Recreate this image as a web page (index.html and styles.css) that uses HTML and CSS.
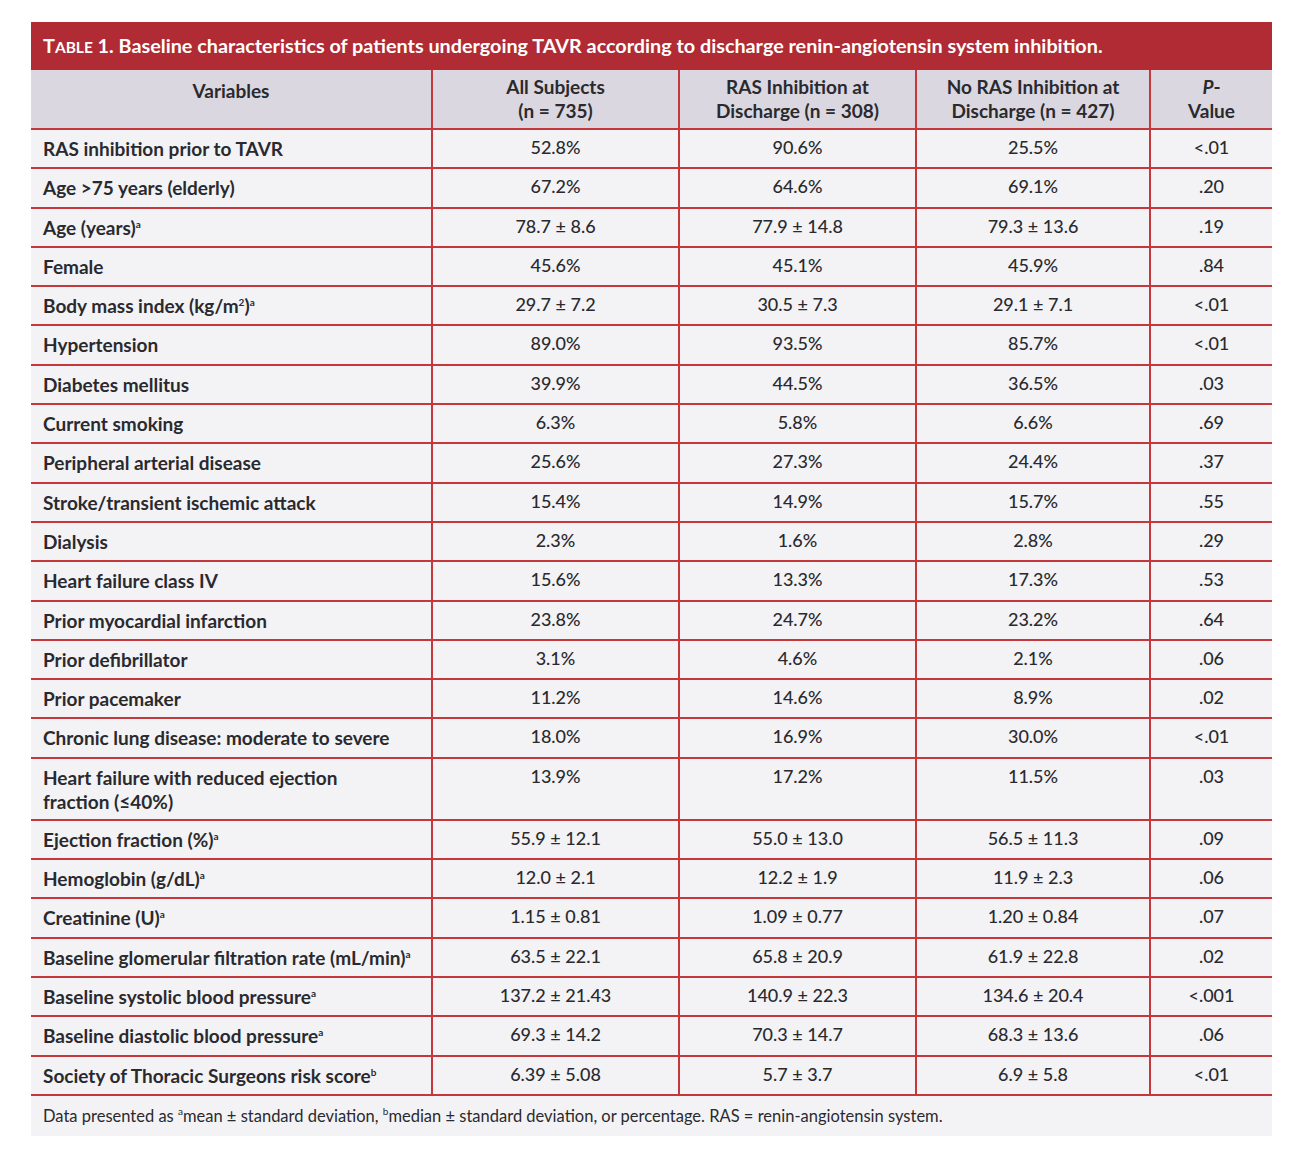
FILE: index.html
```html
<!DOCTYPE html>
<html>
<head>
<meta charset="utf-8">
<link rel="stylesheet" href="styles.css">
</head>
<body>
<div class="wrap">
  <div class="title"><span class="cap">T</span><span class="sc">ABLE</span> 1. Baseline characteristics of patients undergoing TAVR according to discharge renin-angiotensin system inhibition.</div>
  <table class="tbl">
    <colgroup>
      <col class="c1"><col class="c2"><col class="c3"><col class="c4"><col class="c5">
    </colgroup>
    <thead>
      <tr>
        <th class="hv">Variables</th>
        <th>All Subjects<br>(n = 735)</th>
        <th>RAS Inhibition at<br>Discharge (n = 308)</th>
        <th>No RAS Inhibition at<br>Discharge (n = 427)</th>
        <th><i>P</i>-<br>Value</th>
      </tr>
    </thead>
    <tbody>
      <tr><td>RAS inhibition prior to TAVR</td><td>52.8%</td><td>90.6%</td><td>25.5%</td><td>&lt;.01</td></tr>
      <tr><td>Age &gt;75 years (elderly)</td><td>67.2%</td><td>64.6%</td><td>69.1%</td><td>.20</td></tr>
      <tr><td>Age (years)<sup>a</sup></td><td>78.7 ± 8.6</td><td>77.9 ± 14.8</td><td>79.3 ± 13.6</td><td>.19</td></tr>
      <tr><td>Female</td><td>45.6%</td><td>45.1%</td><td>45.9%</td><td>.84</td></tr>
      <tr><td>Body mass index (kg/m<sup>2</sup>)<sup>a</sup></td><td>29.7 ± 7.2</td><td>30.5 ± 7.3</td><td>29.1 ± 7.1</td><td>&lt;.01</td></tr>
      <tr><td>Hypertension</td><td>89.0%</td><td>93.5%</td><td>85.7%</td><td>&lt;.01</td></tr>
      <tr><td>Diabetes mellitus</td><td>39.9%</td><td>44.5%</td><td>36.5%</td><td>.03</td></tr>
      <tr><td>Current smoking</td><td>6.3%</td><td>5.8%</td><td>6.6%</td><td>.69</td></tr>
      <tr><td>Peripheral arterial disease</td><td>25.6%</td><td>27.3%</td><td>24.4%</td><td>.37</td></tr>
      <tr><td>Stroke/transient ischemic attack</td><td>15.4%</td><td>14.9%</td><td>15.7%</td><td>.55</td></tr>
      <tr><td>Dialysis</td><td>2.3%</td><td>1.6%</td><td>2.8%</td><td>.29</td></tr>
      <tr><td>Heart failure class IV</td><td>15.6%</td><td>13.3%</td><td>17.3%</td><td>.53</td></tr>
      <tr><td>Prior myocardial infarction</td><td>23.8%</td><td>24.7%</td><td>23.2%</td><td>.64</td></tr>
      <tr><td>Prior defibrillator</td><td>3.1%</td><td>4.6%</td><td>2.1%</td><td>.06</td></tr>
      <tr><td>Prior pacemaker</td><td>11.2%</td><td>14.6%</td><td>8.9%</td><td>.02</td></tr>
      <tr><td>Chronic lung disease: moderate to severe</td><td>18.0%</td><td>16.9%</td><td>30.0%</td><td>&lt;.01</td></tr>
      <tr class="tall"><td>Heart failure with reduced ejection<br>fraction (≤40%)</td><td>13.9%</td><td>17.2%</td><td>11.5%</td><td>.03</td></tr>
      <tr><td>Ejection fraction (%)<sup>a</sup></td><td>55.9 ± 12.1</td><td>55.0 ± 13.0</td><td>56.5 ± 11.3</td><td>.09</td></tr>
      <tr><td>Hemoglobin (g/dL)<sup>a</sup></td><td>12.0 ± 2.1</td><td>12.2 ± 1.9</td><td>11.9 ± 2.3</td><td>.06</td></tr>
      <tr><td>Creatinine (U)<sup>a</sup></td><td>1.15 ± 0.81</td><td>1.09 ± 0.77</td><td>1.20 ± 0.84</td><td>.07</td></tr>
      <tr><td>Baseline glomerular filtration rate (mL/min)<sup>a</sup></td><td>63.5 ± 22.1</td><td>65.8 ± 20.9</td><td>61.9 ± 22.8</td><td>.02</td></tr>
      <tr><td>Baseline systolic blood pressure<sup>a</sup></td><td>137.2 ± 21.43</td><td>140.9 ± 22.3</td><td>134.6 ± 20.4</td><td>&lt;.001</td></tr>
      <tr><td>Baseline diastolic blood pressure<sup>a</sup></td><td>69.3 ± 14.2</td><td>70.3 ± 14.7</td><td>68.3 ± 13.6</td><td>.06</td></tr>
      <tr><td>Society of Thoracic Surgeons risk score<sup>b</sup></td><td>6.39 ± 5.08</td><td>5.7 ± 3.7</td><td>6.9 ± 5.8</td><td>&lt;.01</td></tr>
    </tbody>
  </table>
  <div class="foot">Data presented as <sup>a</sup>mean ± standard deviation, <sup>b</sup>median ± standard deviation, or percentage. RAS = renin-angiotensin system.</div>
</div>
</body>
</html>
```
FILE: styles.css
```css
html, body {
  margin: 0;
  padding: 0;
  background: #ffffff;
}
body {
  font-family: "Lato", "Open Sans", sans-serif;
  color: #2a2a2e;
}
.wrap {
  width: 1241px;
  margin: 22px 0 0 31px;
}
.title {
  background: #b02b33;
  color: #ffffff;
  font-weight: 700;
  font-size: 19.8px;
  height: 48px;
  line-height: 46px;
  padding-left: 12px;
  box-sizing: border-box;
  white-space: nowrap;
}
.title .sc {
  font-size: 15.5px;
}
.tbl {
  width: 1241px;
  border-collapse: collapse;
  table-layout: fixed;
  background: #f3f3f6;
}
.c1 { width: 401px; }
.c2 { width: 247px; }
.c3 { width: 237px; }
.c4 { width: 234px; }
.c5 { width: 122px; }
.tbl th {
  background: #dad7e0;
  font-weight: 700;
  font-size: 19px;
  line-height: 24px;
  height: 59px;
  padding: 0 0 0 0;
  text-align: center;
  vertical-align: middle;
  border-left: 2px solid #c2383d;
  border-bottom: 2px solid #c2383d;
  box-sizing: border-box;
}
.tbl th:first-child { border-left: none; }
.tbl th.hv { padding-bottom: 17px; }
.tbl td {
  height: 39.3px;
  padding: 5px 0 0 0;
  box-sizing: border-box;
  vertical-align: top;
  text-align: center;
  font-size: 18px;
  line-height: 24px;
  font-weight: 500;
  border-left: 2px solid #c2383d;
  border-bottom: 2px solid #c2383d;
}
.tbl td:first-child {
  text-align: left;
  padding-left: 12px;
  padding-top: 7px;
  font-size: 19px;
  font-weight: 700;
  border-left: none;
}
.tbl tr.tall td { height: 62px; }
sup {
  font-size: 10px;
  line-height: 0;
  vertical-align: 7px;
}
.foot {
  background: #f3f3f6;
  font-size: 16.5px;
  height: 40px;
  line-height: 41px;
  padding-left: 12px;
  box-sizing: border-box;
}
```
